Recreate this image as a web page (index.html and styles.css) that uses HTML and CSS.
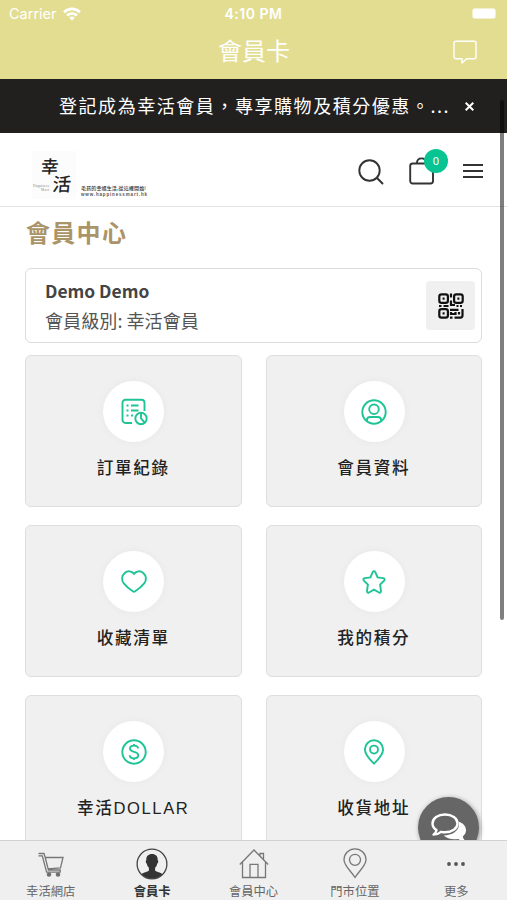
FILE: index.html
```html
<!DOCTYPE html>
<html lang="zh-Hant">
<head>
    <meta charset="UTF-8">
    <meta name="viewport" content="width=device-width, initial-scale=1.0">
    <title>會員卡</title>
    <link rel="stylesheet" href="styles.css">
</head>
<body>
<div class="app">
    <header class="app-header">
        <div class="status">
            <div class="carrier">
                <span>Carrier</span>
                <svg width="18" height="14" viewBox="0 0 18 14" fill="none" stroke="#fff" stroke-width="2.6">
                    <path d="M1 5.2a11.4 11.4 0 0 1 16 0"/>
                    <path d="M4 8.5a7.2 7.2 0 0 1 10 0"/>
                    <path d="M6.2 10.8a4 4 0 0 1 5.6 0L9 13.8z" fill="#fff" stroke="none"/>
                </svg>
            </div>
            <span class="time">4:10 PM</span>
            <div class="battery"></div>
        </div>
        <div class="nav">
            <h1>會員卡</h1>
            <svg class="nav-chat" width="24" height="25" viewBox="0 0 24 25" fill="none" stroke="#fff" stroke-width="1.4" stroke-linejoin="round">
                <path d="M3 1.2h18a2 2 0 0 1 2 2v13.6a2 2 0 0 1-2 2h-7.500l-4.500 4.200v-4.200H3a2 2 0 0 1-2-2V3.200a2 2 0 0 1 2-2z"/>
            </svg>
        </div>
    </header>

    <main class="page">
        <div class="notice">
            <span class="notice-text">登記成為幸活會員，專享購物及積分優惠。...</span>
            <svg class="notice-close" width="9" height="9" viewBox="0 0 9 9" stroke="#fff" stroke-width="2">
                <path d="M.7.7l7.600 7.600M8.300.7L.7 8.300"/>
            </svg>
        </div>

        <div class="site-header">
            <svg class="logo" width="120" height="50" viewBox="0 0 120 50">
                <rect width="44" height="48" fill="#fcfcfc"/>
                <g transform="skewX(-5)">
                    <text class="brush" x="10.500" y="22.500" font-size="17.500">幸</text>
                    <text class="brush" x="23.500" y="40" font-size="18.500">活</text>
                </g>
                <text class="logo-small" x="1" y="36" font-size="3.500" textLength="16">Happiness</text>
                <text class="logo-small" x="9" y="40" font-size="3.500" textLength="8">Mart</text>
                <text class="logo-line" x="49" y="38.500" font-size="5" textLength="65">毛孩的幸福生活,從這裡開始!</text>
                <text class="logo-url" x="49" y="45" font-size="4.500" textLength="66">www.happinessmart.hk</text>
            </svg>
            <div class="tools">
                <svg width="26" height="26" viewBox="0 0 26 26" fill="none" stroke="#333" stroke-width="1.900" stroke-linecap="round">
                    <circle cx="11.500" cy="11.500" r="10.200"/>
                    <path d="M19 19l5.500 5.500"/>
                </svg>
                <div class="cart">
                    <svg width="26" height="28" viewBox="0 0 26 28" fill="none" stroke="#333" stroke-width="1.900">
                        <rect x="1.200" y="6.500" width="22.800" height="20" rx="2.500"/>
                        <path d="M7.800 6.500C8 3 10 1.400 12.600 1.400S17 3 17.400 6.500"/>
                    </svg>
                    <span class="badge">0</span>
                </div>
                <div class="burger"><i></i><i></i><i></i></div>
            </div>
        </div>

        <div class="content">
            <h2>會員中心</h2>

            <div class="member">
                <div>
                    <div class="name">Demo Demo</div>
                    <div class="level">會員級別: 幸活會員</div>
                </div>
                <div class="qr">
                    <svg width="26" height="26" viewBox="0 0 26 26" fill="none" stroke="#111" stroke-width="2.200">
                        <rect x="1.300" y="1.300" width="8.600" height="8.600" rx="2.200"/>
                        <rect x="16.100" y="1.300" width="8.600" height="8.600" rx="2.200"/>
                        <rect x="1.300" y="16.100" width="8.600" height="8.600" rx="2.200"/>
                        <path d="M4.600 5.600h2M19.400 5.600h2M4.600 20.400h2M13 .5v4M13 7.500v4.500h4M1 13h2.500M5.500 13h5M18.500 13h2M22 13h2M12 16.800h8.500M13 19v2h4.500v-2M12 24.600h2.500M16.500 24.600h6q2 0 2-2V16M21 19v2.500"/>
                    </svg>
                </div>
            </div>

            <div class="grid">
                <div class="tile">
                    <div class="circle">
                        <svg width="28" height="28" viewBox="0 0 28 28">
                            <path d="M12 25H5.500a3 3 0 0 1-3-3V4.800a3 3 0 0 1 3-3h16a3 3 0 0 1 3 3V13"/>
                            <path d="M6.500 7.500h2M11 7.500h7.500M6.500 12.500h2M11 12.500h7.500M6.500 17.500h2M11 17.500h2"/>
                            <circle cx="21" cy="20.500" r="5.700"/>
                            <path d="M21 14.800v5.700l3.700 4.200"/>
                        </svg>
                    </div>
                    <p>訂單紀錄</p>
                </div>
                <div class="tile">
                    <div class="circle">
                        <svg width="28" height="28" viewBox="0 0 28 28">
                            <circle cx="14" cy="14" r="11.700"/>
                            <circle cx="14" cy="11.300" r="4.800"/>
                            <path d="M6.900 23.200v-1c0-2.100 1.500-3.200 3.400-3.200h7.400c1.900 0 3.400 1.100 3.400 3.200v1"/>
                        </svg>
                    </div>
                    <p>會員資料</p>
                </div>
                <div class="tile">
                    <div class="circle">
                        <svg width="28" height="28" viewBox="0 0 28 28">
                            <path d="M14 5.800C11.500 2.800 7.500 2.600 5 4.700 1.500 7.600 1.200 12.200 3.800 15.400c2.500 3.200 6.200 6 9 7.900q1.200.8 2.400 0c2.800-1.900 6.500-4.700 9-7.900 2.600-3.200 2.300-7.800-1.200-10.700-2.500-2.100-6.500-1.900-9 1.100z"/>
                        </svg>
                    </div>
                    <p>收藏清單</p>
                </div>
                <div class="tile">
                    <div class="circle">
                        <svg width="28" height="28" viewBox="0 0 28 28">
                            <path d="M12.700 4.100q1.300-2 2.600 0l2.300 5.300 5.600.7q2.400.6.900 2.500l-4 4 .9 6.500q0 2.200-2 1.400L14 21.600l-5 2.900q-2 .8-2-1.400l.9-6.500-4-4q-1.500-1.900.9-2.500l5.600-.7z"/>
                        </svg>
                    </div>
                    <p>我的積分</p>
                </div>
                <div class="tile">
                    <div class="circle">
                        <svg width="28" height="28" viewBox="0 0 28 28">
                            <circle cx="14" cy="14" r="11.700"/>
                            <path d="M18 10.500c0-1.900-1.700-2.900-4-2.900s-4 1-4 3c0 4.500 8.300 2.200 8.300 6.700 0 2.100-1.900 3.100-4.300 3.100s-4.300-1.100-4.300-3.100M14 6v1.600M14 20.400V22"/>
                        </svg>
                    </div>
                    <p>幸活DOLLAR</p>
                </div>
                <div class="tile">
                    <div class="circle">
                        <svg width="28" height="28" viewBox="0 0 28 28">
                            <path d="M14 25.600C10.300 22 4.900 16.500 4.900 11.400a9.100 9.100 0 0 1 18.200 0c0 5.100-5.400 10.600-9.100 14.200z"/>
                            <circle cx="14" cy="11.600" r="4"/>
                        </svg>
                    </div>
                    <p>收貨地址</p>
                </div>
            </div>
        </div>

        <div class="scrollbar"></div>
        <div class="chat-float">
            <svg width="38" height="32" viewBox="0 0 38 32">
                <path d="M28.500 9.500c4.500 1.500 7.500 4.700 7.500 8.700 0 2.500-1.200 4.500-3.200 6.200.3 2 1.500 3.500 3.200 5-3.200 0-5.800-1-7.800-2.500-5.500 1.200-11.500-.3-14.500-3.400C23 23.300 31 18 28.500 9.500z" fill="#fff"/>
                <path d="M15 2.500c7 0 12.500 3.900 12.500 8.900S22 20.300 15 20.300c-1.400 0-2.700-.2-4-.5-2.200 1.900-4.500 2.800-7.500 2.800 1.800-1.300 2.800-2.800 3-4.500-2.500-1.700-4-4-4-6.700 0-5 5.500-8.900 12.500-8.900z" fill="#666" stroke="#fff" stroke-width="2.400" stroke-linejoin="round"/>
            </svg>
        </div>
    </main>

    <nav class="tabs">
        <div class="tab">
            <svg width="32" height="34" viewBox="0 0 32 34">
                <path d="M3.500 6.500h5.500l1.200 4H28l-2.500 10.500-12.800.8M3.500 8.800H7.300l4.300 16.400h13.600v-2.200H12.800M10.200 10.500l3.200 12.500"/>
                <circle cx="14" cy="27.500" r="1.700" fill="#666"/>
                <circle cx="23" cy="27.500" r="1.700" fill="#666"/>
            </svg>
            <span>幸活網店</span>
        </div>
        <div class="tab active">
            <svg width="34" height="34" viewBox="0 0 34 34">
                <circle cx="17" cy="17" r="14.900" stroke="#444"/>
                <path d="M17 7c3.900 0 5.900 2.400 5.700 6.300.9.500.6 2.900-.5 3.400-.4 1.800-1.200 3.200-2.100 4v2.800c1.200 1.500 5.400 1.700 7.300 3.700A14.900 14.900 0 0 1 6.600 27.200c1.900-2 6.100-2.200 7.300-3.700v-2.800c-.9-.8-1.700-2.200-2.100-4-1.100-.5-1.400-2.900-.5-3.400C11.100 9.400 13.100 7 17 7z" fill="#333" stroke="none"/>
            </svg>
            <span>會員卡</span>
        </div>
        <div class="tab">
            <svg width="32" height="34" viewBox="0 0 32 34">
                <path d="M1.800 17.500L16 3l14.200 14.500M4.500 15v15.500h23V15M12 30.500V17.300h8v13.200M22 9V6.500h3.500v6"/>
            </svg>
            <span>會員中心</span>
        </div>
        <div class="tab">
            <svg width="32" height="34" viewBox="0 0 32 34">
                <path d="M16 30.500C12.500 24.500 5 19 5 12.800a11 11 0 0 1 22 0C27 19 19.500 24.500 16 30.500z"/>
                <circle cx="16" cy="12.800" r="5.500"/>
            </svg>
            <span>門市位置</span>
        </div>
        <div class="tab">
            <svg width="32" height="34" viewBox="0 0 32 34">
                <g fill="#555" stroke="none"><circle cx="9" cy="17" r="1.900"/><circle cx="16" cy="17" r="1.900"/><circle cx="23" cy="17" r="1.900"/></g>
            </svg>
            <span>更多</span>
        </div>
    </nav>
</div>
</body>
</html>
```
FILE: styles.css
```css
* {
    box-sizing: border-box;
}

body {
    margin: 0;
    font-family: "Noto Sans CJK TC", sans-serif;
    color: #222;
    background: #fff;
}

h1, h2, p {
    margin: 0;
}

svg {
    display: block;
    flex-shrink: 0;
}

.app {
    display: flex;
    flex-direction: column;
    height: 900px;
    overflow: hidden;
}

/* top bar */
.app-header {
    flex: 0 0 79px;
    background: #e3dd92;
    color: #fff;
}

.status {
    display: grid;
    grid-template-columns: 1fr auto 1fr;
    align-items: center;
    height: 27px;
    padding: 0 11px 0 9px;
    font: 14.5px/27px Inter, sans-serif;
}

.carrier {
    display: flex;
    align-items: center;
    gap: 6px;
}

.time {
    padding-left: 2px;
    font-size: 14px;
    font-weight: 600;
    letter-spacing: 0.5px;
}

.battery {
    justify-self: end;
    width: 24px;
    height: 11px;
    background: #fff;
    border: 1px solid #f3f0cf;
    border-radius: 3px;
}

.nav {
    display: grid;
    grid-template-columns: 1fr auto 1fr;
    align-items: center;
    height: 48px;
    padding-right: 30px;
    padding-left: 31px;
}

.nav h1 {
    grid-column: 2;
    font-size: 24px;
    font-weight: 400;
    line-height: 46px;
    height: 48px;
}

.nav-chat {
    justify-self: end;
    margin-top: 2px;
}

/* web page */
.page {
    position: relative;
    flex: 1;
    min-height: 0;
    overflow: hidden;
}

.notice {
    display: flex;
    align-items: center;
    height: 54px;
    padding: 0 33px 0 59px;
    background: #22201f;
    color: #fff;
}

.notice-text {
    flex: 1;
    padding-bottom: 2px;
    font-size: 18px;
    letter-spacing: 1.55px;
    white-space: nowrap;
}

.site-header {
    display: flex;
    justify-content: space-between;
    height: 74px;
    padding: 18px 24px 0 32px;
    border-bottom: 1px solid #e2e2e2;
}

.brush {
    font-family: "Liberation Serif", "Noto Sans CJK TC", serif;
    font-weight: 500;
    fill: #222;
}

.logo-small {
    font-family: "Liberation Serif", serif;
    fill: #888;
}

.logo-line {
    font-weight: 500;
    fill: #333;
}

.logo-url {
    font-family: "Liberation Sans", sans-serif;
    font-weight: 700;
    fill: #555;
}

.tools {
    display: flex;
    align-items: flex-start;
    padding-top: 8px;
}

.cart {
    position: relative;
    margin: -2px 28px 0 25px;
}

.badge {
    position: absolute;
    top: -8px;
    left: 15px;
    width: 24px;
    height: 24px;
    border-radius: 50%;
    background: #08c492;
    color: #fff;
    font: 11px/24px "Noto Sans", sans-serif;
    text-align: center;
}

.burger {
    display: flex;
    flex-direction: column;
    gap: 4px;
    width: 20px;
    padding-top: 5px;
}

.burger i {
    height: 2px;
    background: #333;
}

.content {
    padding: 8px 25px 0;
}

h2 {
    height: 53px;
    padding-left: 1px;
    color: #aa9468;
    font-size: 24px;
    font-weight: 700;
    line-height: 34px;
    letter-spacing: 1.3px;
}

.member {
    display: flex;
    align-items: center;
    justify-content: space-between;
    height: 75px;
    padding: 0 6px 0 19px;
    border: 1.5px solid #dcdcdc;
    border-radius: 6px;
}

.name {
    color: #444;
    font-size: 17.4px;
    font-weight: 700;
    line-height: 28px;
}

.level {
    color: #555;
    font-size: 18.1px;
    line-height: 30px;
}

.qr {
    display: flex;
    align-items: center;
    justify-content: center;
    width: 49px;
    height: 49px;
    border-radius: 4px;
    background: #f0f0f0;
}

.grid {
    display: grid;
    grid-template-columns: 1fr 1fr;
    gap: 18px 24px;
    margin-top: 12px;
}

.tile {
    display: flex;
    flex-direction: column;
    align-items: center;
    height: 152px;
    padding-top: 25px;
    border: 1px solid #dedede;
    border-radius: 6px;
    background: #f0f0f0;
}

.circle {
    display: flex;
    align-items: center;
    justify-content: center;
    width: 61px;
    height: 61px;
    margin-left: 1px;
    border-radius: 50%;
    background: #fff;
    box-shadow: 0 0 10px rgba(0, 0, 0, 0.04);
}

.circle svg {
    fill: none;
    stroke: #1fc496;
    stroke-width: 1.9;
}

.tile p {
    margin-top: 14px;
    font-family: "Liberation Sans", "Noto Sans CJK TC", sans-serif;
    font-size: 16.6px;
    font-weight: 500;
    line-height: 26px;
    letter-spacing: 1.6px;
}

.scrollbar {
    position: absolute;
    top: 21px;
    right: 3px;
    width: 4px;
    height: 520px;
    border-radius: 2px;
    background: rgba(0, 0, 0, 0.5);
}

.chat-float {
    position: absolute;
    top: 718px;
    left: 418px;
    display: flex;
    justify-content: center;
    width: 61px;
    height: 61px;
    padding-top: 15px;
    border-radius: 50%;
    background: #666;
    box-shadow: 1px 1px 5px rgba(0, 0, 0, 0.4);
}

/* bottom tabs */
.tabs {
    display: flex;
    flex: 0 0 60px;
    min-height: 0;
    border-top: 1px solid #d2d2d2;
    background: #efefef;
}

.tab {
    display: flex;
    flex: 1;
    flex-direction: column;
    align-items: center;
    padding-top: 6px;
    color: #666;
    font-size: 12.3px;
    line-height: 20px;
}

.tab svg {
    fill: none;
    stroke: #777;
    stroke-width: 1.3;
}

.tab.active {
    color: #333;
    font-weight: 700;
}
```
